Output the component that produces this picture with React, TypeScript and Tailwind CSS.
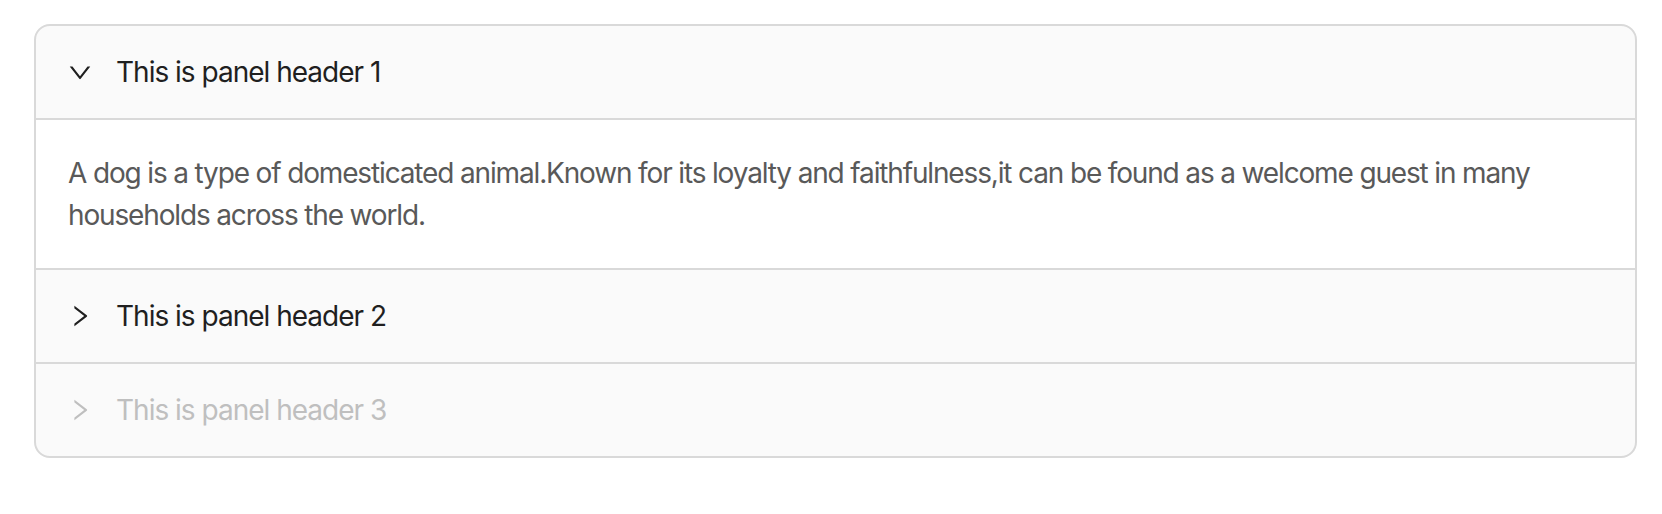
import { useState } from 'react';

interface Panel {
  key: string;
  header: string;
  text: string;
  disabled?: boolean;
}

const text =
  'A dog is a type of domesticated animal.Known for its loyalty and faithfulness,it can be found as a welcome guest in many households across the world.';

const panels: Panel[] = [
  { key: '1', header: 'This is panel header 1', text },
  { key: '2', header: 'This is panel header 2', text },
  { key: '3', header: 'This is panel header 3', text, disabled: true },
];

function Arrow({ open }: { open: boolean }) {
  return (
    <svg
      viewBox="64 64 896 896"
      className={open ? 'w-6 h-6 rotate-90' : 'w-6 h-6'}
      fill="currentColor"
    >
      <path d="M765.7 486.8L314.9 134.7A7.97 7.97 0 00302 141v77.3c0 4.9 2.3 9.6 6.1 12.6l360 281.1-360 281.1c-3.9 3-6.1 7.7-6.1 12.6V883c0 6.7 7.7 10.4 12.9 6.3l450.8-352.1a31.96 31.96 0 000-50.4z" />
    </svg>
  );
}

export default function App() {
  const [active, setActive] = useState<string[]>(['1']);

  const toggle = (p: Panel) => {
    if (p.disabled) return;
    setActive((prev) =>
      prev.includes(p.key) ? prev.filter((k) => k !== p.key) : [...prev, p.key]
    );
  };

  return (
    <div className="min-h-screen bg-white pt-[24px] pl-[34px]" style={{ fontFamily: 'Inter, "Noto Sans", sans-serif' }}>
      <div className="w-[1603px] border-2 border-[#d9d9d9] rounded-[16px] bg-[#fafafa] overflow-hidden">
        {panels.map((p, i) => {
          const open = active.includes(p.key);
          return (
            <div key={p.key} className={i > 0 ? 'border-t-2 border-[#d9d9d9]' : ''}>
              <div
                onClick={() => toggle(p)}
                className={
                  'flex items-center h-[92px] px-[32px] text-[28px] leading-[44px] tracking-[-1px] ' +
                  (p.disabled ? 'text-[#bfbfbf] cursor-not-allowed' : 'text-[#1f1f1f] cursor-pointer')
                }
              >
                <span className="flex items-center justify-center w-6 h-6 mr-6">
                  <Arrow open={open} />
                </span>
                <span>{p.header}</span>
              </div>
              {open && (
                <div className="border-t-2 border-[#d9d9d9] bg-white px-[32px] py-[32px] text-[28px] leading-[42px] tracking-[-1.15px] text-[#595959]">
                  {p.text}
                </div>
              )}
            </div>
          );
        })}
      </div>
    </div>
  );
}
